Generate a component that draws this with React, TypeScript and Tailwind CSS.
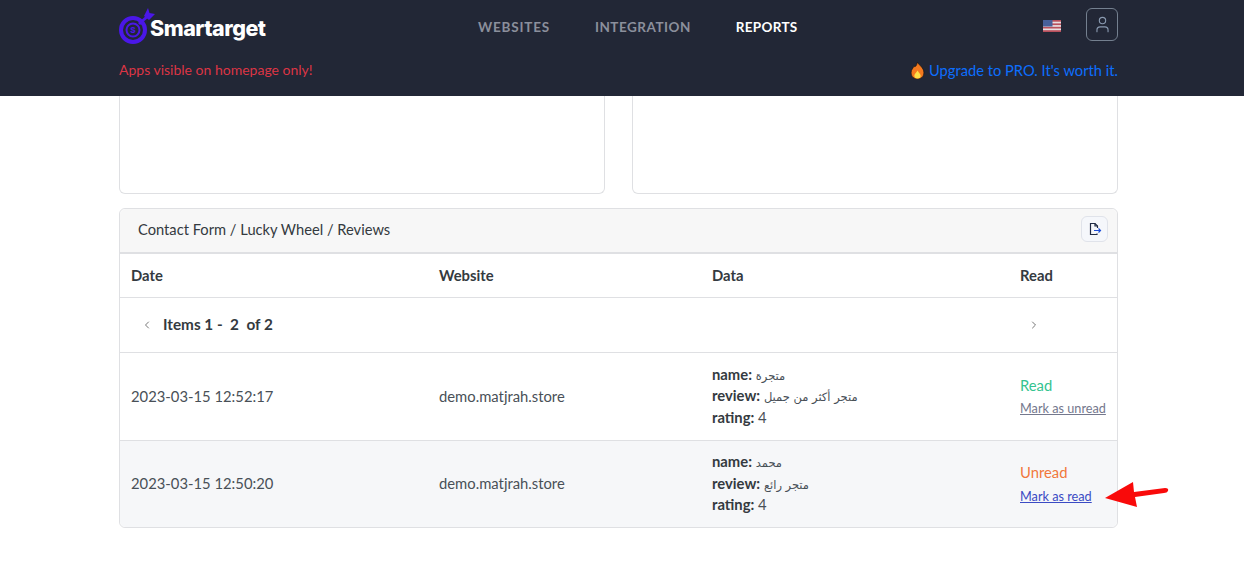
import React from 'react';
import { User, ChevronLeft, ChevronRight } from 'lucide-react';

const FONT = "font-['Lato','Noto_Sans','DejaVu_Sans',sans-serif]";

const Logo = () => (
  <svg width="36" height="36" viewBox="0 0 36 36" className="shrink-0">
    <circle cx="14" cy="22" r="12" fill="none" stroke="#4a17e8" strokeWidth="4" />
    <circle cx="14" cy="22" r="6.500" fill="none" stroke="#4a17e8" strokeWidth="2" />
    <text x="14" y="25" textAnchor="middle" fontSize="8" fontWeight="800" fill="#4a17e8" fontFamily="Inter, sans-serif">S</text>
    <path d="M20 16 L30 7" stroke="#4a17e8" strokeWidth="3" />
    <path d="M25 8 L29 0 L30.500 5 L36 6 L30 12 Z" fill="#4a17e8" />
  </svg>
);

const Flag = () => (
  <svg width="18" height="12" viewBox="0 0 18 12">
    <rect width="18" height="12" fill="#e8dfe2" />
    <rect y="0" width="18" height="1.700" fill="#b8505c" />
    <rect y="3.400" width="18" height="1.700" fill="#b8505c" />
    <rect y="6.800" width="18" height="1.700" fill="#b8505c" />
    <rect y="10.200" width="18" height="1.800" fill="#b8505c" />
    <rect width="9.500" height="6.500" fill="#47609a" />
  </svg>
);

const Flame = () => (
  <svg width="15" height="17" viewBox="0 0 14 16">
    <path d="M7 0 C8 3 13 5 13 10 C13 14 10 16 7 16 C4 16 1 14 1 10 C1 7 3 6 3.500 4 C5 5 6 4 7 0 Z" fill="#f4791f" stroke="#111" strokeWidth="0.600" />
    <path d="M7 8 C8 10 10 11 10 13 C10 15 8.500 15.500 7 15.500 C5.500 15.500 4 15 4 13 C4 11 6 10 7 8 Z" fill="#fde047" />
  </svg>
);

const ExportIcon = () => (
  <svg width="14" height="14" viewBox="0 0 14 14" fill="none" stroke="#1f2a44" strokeWidth="1.200">
    <path d="M9 11.500 V12.500 H2.500 V1.500 H7 L9.500 4 V6" />
    <path d="M7 1.500 V4 H9.500" />
    <path d="M6 8.500 H12.500 M10.500 6.500 L12.500 8.500 L10.500 10.500" stroke="#1d4ed8" />
  </svg>
);

const rows = [
  { date: '2023-03-15 12:52:17', name: 'متجرة', review: 'متجر أكثر من جميل', read: true },
  { date: '2023-03-15 12:50:20', name: 'محمد', review: 'متجر رائع', read: false },
];

const COLS = 'grid grid-cols-[308px_273px_308px_1fr]';

export default function App() {
  return (
    <div className={`${FONT} h-[568px] w-[1244px] overflow-hidden bg-white text-[14.800px] text-[#495057]`}>
      <header className="h-[96px] bg-[#222736]">
        <div className="ml-[119px] w-[999px]">
          <div className="flex h-[52px] items-center">
            <div className="flex w-[340px] items-center">
              <Logo />
              <span className="-ml-[5px] mt-[4px] font-['Inter',sans-serif] text-[21.500px] font-extrabold tracking-[-0.5px] text-white">Smartarget</span>
            </div>
            <nav className="ml-[19px] mt-[2px] flex gap-[45px] text-[13.500px] font-bold">
              <span className="tracking-[0.8px] text-[#8b8f9c]">WEBSITES</span>
              <span className="tracking-[0.5px] text-[#8b8f9c]">INTEGRATION</span>
              <span className="tracking-[0.3px] text-white">REPORTS</span>
            </nav>
            <div className="ml-auto flex items-center gap-[25px]">
              <Flag />
              <button className="mb-[4px] flex h-[33px] w-[32px] items-center justify-center rounded-[6px] border border-[#74808f]">
                <User size={19} strokeWidth={1.4} className="text-[#8a9ab0]" />
              </button>
            </div>
          </div>
          <div className="flex items-center justify-between pt-[6px]">
            <span className="text-[14px] text-[#dc3545]">Apps visible on homepage only!</span>
            <span className="mt-[1px] flex items-center gap-[4px] text-[14.700px] text-[#0d6efd]">
              <Flame />
              Upgrade to PRO. It's worth it.
            </span>
          </div>
        </div>
      </header>

      <main className="ml-[119px] w-[999px]">
        <div className="flex gap-[27px]">
          <div className="h-[98px] flex-1 rounded-b-[6px] border border-t-0 border-[#dfe0e3]" />
          <div className="h-[98px] flex-1 rounded-b-[6px] border border-t-0 border-[#dfe0e3]" />
        </div>

        <section className="relative mt-[14px] rounded-[6px] border border-[#dfe0e3]">
          <div className="flex h-[45px] items-center justify-between rounded-t-[6px] border-b-2 border-[#dfe0e3] bg-[#f7f7f7] pb-[3px] pl-[18px] pr-[9px]">
            <span className="text-[14.700px] text-[#343a40]">Contact Form / Lucky Wheel / Reviews</span>
            <button className="flex h-[26px] w-[27px] items-center justify-center rounded-[6px] border border-[#e0e3ea] bg-[#f5f7fb]">
              <ExportIcon />
            </button>
          </div>

          <div className={`${COLS} h-[44px] items-center border-b border-[#dfe0e3] pb-[1px] pl-[11px] font-bold text-[#343a40]`}>
            <span>Date</span>
            <span>Website</span>
            <span>Data</span>
            <span>Read</span>
          </div>

          <div className="relative flex h-[55px] items-center border-b border-[#dfe0e3] pb-[1px] pl-[21px] text-[15.300px] font-bold text-[#343a40]">
            <ChevronLeft size={12} className="text-[#777]" />
            <span className="ml-[10px] whitespace-pre">Items 1 -  2  of 2</span>
            <ChevronRight size={12} className="absolute left-[908px] text-[#777]" />
          </div>

          {rows.map((row, i) => (
            <div
              key={i}
              className={`${COLS} items-center pb-[1px] pl-[11px] ${row.read ? 'h-[88px] border-b border-[#dfe0e3]' : 'h-[86px] rounded-b-[6px] bg-[#f6f7f9]'}`}
            >
              <span>{row.date}</span>
              <span>demo.matjrah.store</span>
              <div className="leading-[21.500px]">
                <div><b className="font-bold text-[#343a40]">name:</b> <span className="font-['DejaVu_Sans'] text-[11.500px] leading-none">{row.name}</span></div>
                <div><b className="font-bold text-[#343a40]">review:</b> <span className="font-['DejaVu_Sans'] text-[11.500px] leading-none">{row.review}</span></div>
                <div><b className="font-bold text-[#343a40]">rating:</b> 4</div>
              </div>
              <div>
                <div className={row.read ? 'text-[#34c38f]' : 'text-[#f1783c]'}>{row.read ? 'Read' : 'Unread'}</div>
                <a className={`mt-[3px] block text-[12.700px] underline ${row.read ? 'text-[#74788d]' : 'text-[#3b4bc4]'}`}>
                  {row.read ? 'Mark as unread' : 'Mark as read'}
                </a>
              </div>
            </div>
          ))}

          <svg width="70" height="30" viewBox="0 0 70 30" className="absolute left-[985px] top-[272px]">
            <path d="M0 17 L28 1 L29 11 L60 7 Q64 7 63 10 Q62 12 59 12 L30 16 L32 26 Z" fill="#f90a0a" />
          </svg>
        </section>
      </main>
    </div>
  );
}
